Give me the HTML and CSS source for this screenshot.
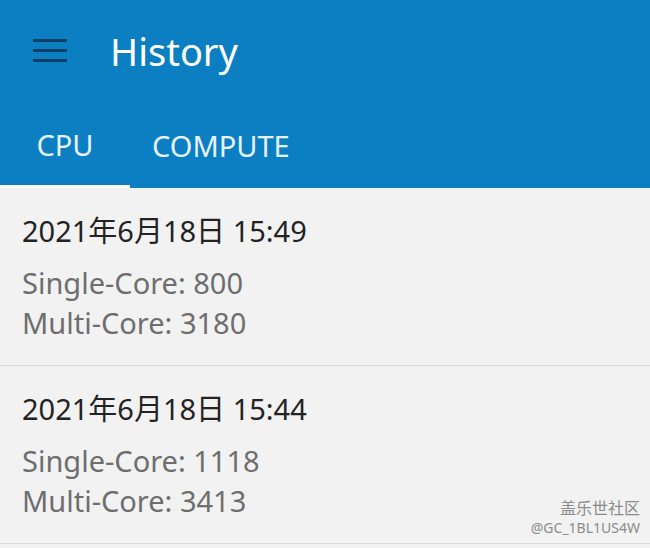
FILE: index.html
```html
<!DOCTYPE html>
<html lang="zh">
<head>
    <meta charset="UTF-8">
    <meta name="viewport" content="width=device-width, initial-scale=1.0">
    <title>History</title>
    <link rel="stylesheet" href="styles.css">
</head>
<body>

    <div id="header">
        <div class="toolbar">
            <div class="menu-btn">
                <svg width="34" height="24" viewBox="0 0 34 24">
                    <rect x="0" y="0" width="34" height="3" fill="#0f3f66"/>
                    <rect x="0" y="10" width="34" height="3" fill="#0f3f66"/>
                    <rect x="0" y="20" width="34" height="3" fill="#0f3f66"/>
                </svg>
            </div>
            <div class="title">History</div>
        </div>
        <div class="tabs">
            <div class="tab active">CPU</div>
            <div class="tab">COMPUTE</div>
        </div>
    </div>

    <div id="historyList">
        <div class="item">
            <div class="date">2021年6月18日 15:49</div>
            <div class="score">Single-Core: 800</div>
            <div class="score">Multi-Core: 3180</div>
        </div>
        <div class="item">
            <div class="date">2021年6月18日 15:44</div>
            <div class="score">Single-Core: 1118</div>
            <div class="score">Multi-Core: 3413</div>
        </div>
    </div>

    <div class="watermark">
        <div class="wm-name">盖乐世社区</div>
        <div class="wm-user">@GC_1BL1US4W</div>
    </div>

</body>
</html>
```

FILE: styles.css
```css
body {
    font-family: 'Noto Sans', 'Noto Sans CJK SC', sans-serif;
    background-color: #f2f2f2;
    margin: 0;
    padding: 0;
    height: 548px;
    overflow: hidden;
    position: relative;
}
#header {
    background-color: #0b7fc2;
    color: white;
}
.toolbar {
    display: flex;
    align-items: center;
    height: 104px;
}
.menu-btn {
    width: 34px;
    height: 24px;
    margin-left: 33px;
    margin-top: -2px;
}
.menu-btn svg {
    display: block;
}
.title {
    margin-left: 43px;
    font-size: 38px;
    margin-top: -2px;
}
.tabs {
    display: flex;
    height: 84px;
}
.tab {
    display: flex;
    align-items: center;
    font-size: 29px;
    color: #e6f3fb;
    box-sizing: border-box;
    padding-bottom: 2px;
}
.tab.active {
    width: 130px;
    justify-content: center;
    border-bottom: 3px solid white;
    padding-bottom: 0;
}
.tab:not(.active) {
    padding-left: 22px;
}
.item {
    padding: 23px 22px 22px;
    border-bottom: 1px solid #dadada;
}
.date {
    font-size: 29px;
    line-height: 40px;
    color: #232323;
    margin-bottom: 12px;
}
.score {
    font-size: 29px;
    line-height: 40px;
    color: #6e6e6e;
}
.watermark {
    position: absolute;
    right: 10px;
    bottom: 12px;
    text-align: right;
    color: #8c8c8c;
}
.wm-name {
    font-size: 16px;
    line-height: 21px;
}
.wm-user {
    font-size: 14px;
    line-height: 17px;
}
```
